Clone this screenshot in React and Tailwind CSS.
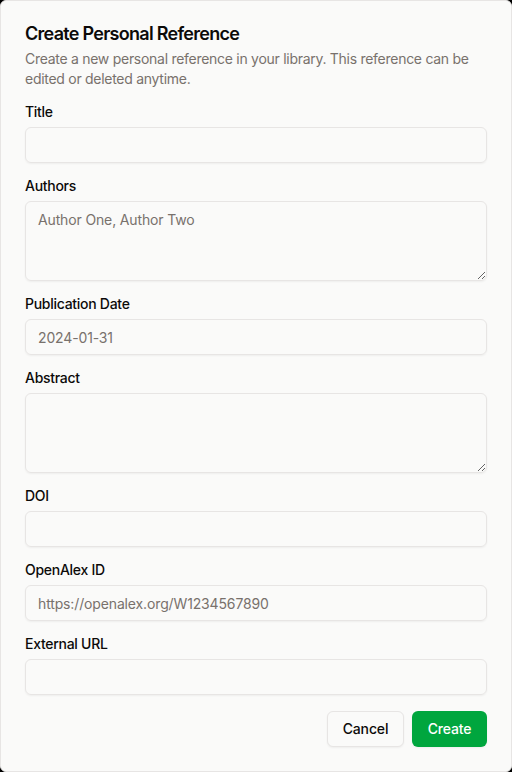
import React from "react";

const font = { fontFamily: "Inter, 'Noto Sans', sans-serif" };

function Label({ children }) {
  return <label className="block text-sm font-medium leading-none tracking-[-0.02em] text-[#0c0a09]">{children}</label>;
}

function Input({ placeholder }) {
  return (
    <input
      placeholder={placeholder}
      className="block h-9 w-full rounded-md border border-[#e7e5e4] bg-transparent px-3 py-1 text-sm tracking-[-0.01em] text-[#0c0a09] shadow-[0_1px_2px_rgba(0,0,0,0.05)] outline-none placeholder:text-[#78716c]"
      style={font}
    />
  );
}

function Textarea({ placeholder }) {
  return (
    <textarea
      placeholder={placeholder}
      className="block min-h-[80px] h-[80px] w-full rounded-md border border-[#e7e5e4] bg-transparent px-3 py-2 text-sm tracking-[-0.01em] text-[#0c0a09] shadow-[0_1px_2px_rgba(0,0,0,0.05)] outline-none placeholder:text-[#78716c]"
      style={font}
    />
  );
}

function Field({ label, children }) {
  return (
    <div className="flex flex-col gap-2">
      <Label>{label}</Label>
      {children}
    </div>
  );
}

export default function App() {
  return (
    <div className="h-[772px] w-[512px] bg-black" style={font}>
      <div className="flex h-full w-full flex-col gap-4 rounded-md border border-[#e7e5e4] bg-[#fafaf9] p-6">
        <div className="flex flex-col gap-1.5">
          <h2 className="text-lg font-semibold leading-none tracking-[-0.04em] text-[#0c0a09]">Create Personal Reference</h2>
          <p className="text-sm leading-5 tracking-[-0.02em] text-[#78716c]">
            Create a new personal reference in your library. This reference can be edited or deleted anytime.
          </p>
        </div>
        <Field label="Title"><Input /></Field>
        <Field label="Authors"><Textarea placeholder="Author One, Author Two" /></Field>
        <Field label="Publication Date"><Input placeholder="2024-01-31" /></Field>
        <Field label="Abstract"><Textarea /></Field>
        <Field label="DOI"><Input /></Field>
        <Field label="OpenAlex ID"><Input placeholder="https://openalex.org/W1234567890" /></Field>
        <Field label="External URL"><Input /></Field>
        <div className="flex justify-end gap-2">
          <button className="h-9 w-[77px] rounded-md border border-[#e7e5e4] bg-[#fafaf9] text-sm font-medium tracking-[-0.01em] text-[#0c0a09] shadow-[0_1px_2px_rgba(0,0,0,0.05)]">
            Cancel
          </button>
          <button className="h-9 w-[75px] rounded-md bg-[#00a63e] text-sm font-medium tracking-[-0.01em] text-white shadow-[0_1px_2px_rgba(0,0,0,0.05)]">
            Create
          </button>
        </div>
      </div>
    </div>
  );
}
